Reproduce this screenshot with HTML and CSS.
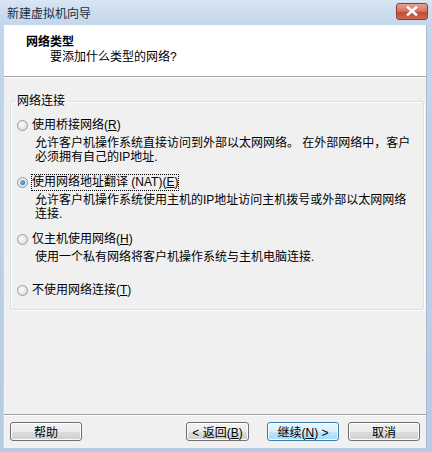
FILE: index.html
```html
<!DOCTYPE html>
<html lang="zh-CN">
<head>
  <meta charset="UTF-8">
  <title>新建虚拟机向导</title>
  <link rel="stylesheet" href="styles.css">
</head>
<body>
  <div class="window">
    <div class="titlebar">
      <span class="title">新建虚拟机向导</span>
      <span class="close">
        <svg width="14" height="10" viewBox="0 0 14 10"><path d="M3 1.5 L11 8.5 M11 1.5 L3 8.5" stroke="#fff" stroke-width="2.6" stroke-linecap="square"/></svg>
      </span>
    </div>
    <div class="client">
      <div class="header">
        <h1>网络类型</h1>
        <p>要添加什么类型的网络?</p>
      </div>
      <div class="content">
        <fieldset class="group">
          <legend>网络连接</legend>
          <div class="option">
            <label><span class="radio"></span>使用桥接网络(<u>R</u>)</label>
            <p>允许客户机操作系统直接访问到外部以太网网络。 在外部网络中，客户必须拥有自己的IP地址.</p>
          </div>
          <div class="option">
            <label><span class="radio checked"></span><span class="focus">使用网络地址翻译 (NAT)(<u>E</u>)</span></label>
            <p>允许客户机操作系统使用主机的IP地址访问主机拨号或外部以太网网络连接.</p>
          </div>
          <div class="option">
            <label><span class="radio"></span>仅主机使用网络(<u>H</u>)</label>
            <p>使用一个私有网络将客户机操作系统与主机电脑连接.</p>
          </div>
          <div class="option last">
            <label><span class="radio"></span>不使用网络连接(<u>T</u>)</label>
          </div>
        </fieldset>
      </div>
      <div class="footer">
        <button class="btn">帮助</button>
        <div class="nav">
          <button class="btn">&lt; 返回(<u>B</u>)</button>
          <button class="btn default">继续(<u>N</u>) &gt;</button>
          <button class="btn">取消</button>
        </div>
      </div>
    </div>
  </div>
</body>
</html>
```
FILE: styles.css
```css
body {
  margin: 0;
  font-family: "Liberation Sans", "Noto Sans CJK SC", sans-serif;
  font-size: 12px;
  color: #000;
  background: #8fadc4;
}
.window {
  width: 432px;
  height: 452px;
  display: flex;
  flex-direction: column;
  background: linear-gradient(to bottom, #d7e5f4, #c3d6eb 25px, #b5cbe1);
}
.titlebar {
  height: 25px;
  display: flex;
  align-items: center;
  justify-content: space-between;
  padding: 0 4px 0 7px;
}
.title {
  font-size: 12px;
  color: #1e2a38;
}
.close {
  width: 32px;
  height: 17px;
  margin-top: -3px;
  border: 1px solid #8c3b32;
  border-radius: 3px;
  background: linear-gradient(to bottom, #e8a595, #d2705c 50%, #c0452f 51%, #d06a50);
  display: flex;
  align-items: center;
  justify-content: center;
  box-sizing: border-box;
}
.client {
  flex: 1;
  display: flex;
  flex-direction: column;
  margin: 0 5px 4px 3px;
  background: #f0f0f0;
  border-left: 1px solid #c9d6e4;
  border-right: 1px solid #a8bccf;
}
.header {
  background: #fff;
  height: 52px;
  padding: 10px 0 0 22px;
  box-sizing: border-box;
  border-bottom: 1px solid #a0a0a0;
  box-shadow: 0 1px 0 #fff;
}
.header h1 {
  margin: 0;
  font-size: 12px;
  font-weight: bold;
  line-height: 15px;
}
.header p {
  margin: 0;
  padding-left: 24px;
  line-height: 15px;
}
.content {
  flex: 1;
  padding: 17px 6px 0 6px;
}
.group {
  margin: 0;
  padding: 10px 6px 10px 10px;
  border: 1px solid #d5dfe5;
  border-radius: 3px;
  box-shadow: inset 1px 1px 0 #fff, 1px 1px 0 #fff;
  height: 216px;
  box-sizing: border-box;
}
.group legend {
  padding: 0 2px;
  margin-left: -6px;
  line-height: 14px;
}
.option {
  margin-bottom: 11px;
}
.option label {
  display: flex;
  align-items: center;
  line-height: 15px;
  margin-left: -4px;
}
.option p {
  margin: 3px 0 0 14px;
  line-height: 14px;
  width: 382px;
}
.option.last {
  margin-top: 19px;
}
.radio {
  width: 11px;
  height: 11px;
  border-radius: 50%;
  border: 1px solid #9a9a9a;
  background: radial-gradient(circle at 40% 40%, #fff, #dedede 70%, #cfcfcf);
  box-sizing: border-box;
  margin-right: 4px;
  position: relative;
}
.radio.checked::after {
  content: "";
  position: absolute;
  left: 2px;
  top: 2px;
  width: 5px;
  height: 5px;
  border-radius: 50%;
  background: radial-gradient(circle at 35% 35%, #7cc4f0, #1c5a94);
}
.focus {
  outline: 1px dotted #000;
}
.footer {
  height: 33px;
  border-top: 1px solid #a0a0a0;
  box-shadow: inset 0 1px 0 #fff;
  display: flex;
  align-items: center;
  justify-content: space-between;
  padding: 0 6px 0 6px;
}
.nav {
  display: flex;
  gap: 9px;
}
.nav .btn:first-child {
  width: 63px;
  margin-right: 9px;
}
.btn {
  width: 72px;
  height: 19px;
  padding: 0;
  font-family: inherit;
  font-size: 12px;
  color: #000;
  border: 1px solid #707070;
  border-radius: 3px;
  background: linear-gradient(to bottom, #f2f2f2, #ebebeb 50%, #dddddd 51%, #cfcfcf);
  box-shadow: inset 0 0 0 1px #fcfcfc;
}
.btn.default {
  border-color: #3c7fb1;
  background: linear-gradient(to bottom, #eaf6fd, #d9f0fc 50%, #bee6fd 51%, #a7d9f5);
}
```
